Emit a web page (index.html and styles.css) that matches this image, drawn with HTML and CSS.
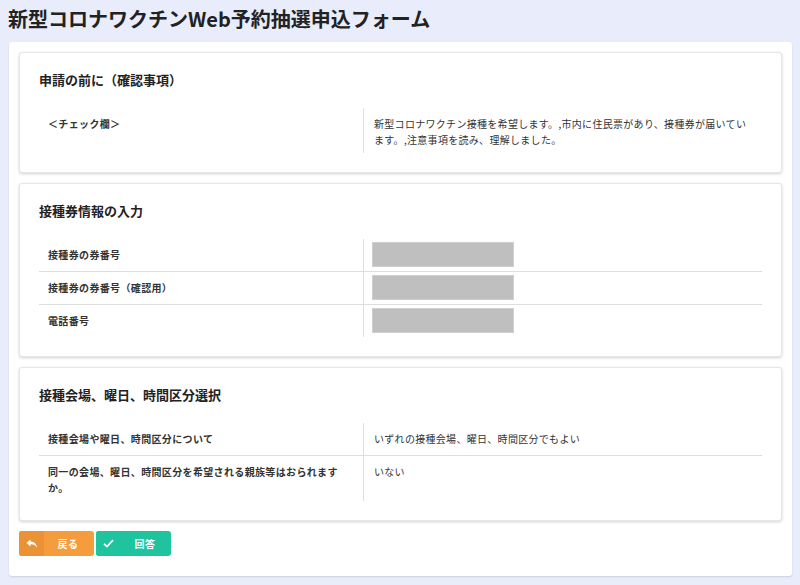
FILE: index.html
```html
<!DOCTYPE html>
<html lang="ja">
<head>
<meta charset="utf-8">
<title>新型コロナワクチンWeb予約抽選申込フォーム</title>
<link rel="stylesheet" href="styles.css">
</head>
<body>
<h1 class="page-title">新型コロナワクチンWeb予約抽選申込フォーム</h1>
<main class="panel">
  <section class="card">
    <h2 class="card-title">申請の前に（確認事項）</h2>
    <div class="table">
      <div class="row">
        <div class="label">＜チェック欄＞</div>
        <div class="value">新型コロナワクチン接種を希望します。,市内に住民票があり、接種券が届いています。,注意事項を読み、理解しました。</div>
      </div>
    </div>
  </section>
  <section class="card">
    <h2 class="card-title">接種券情報の入力</h2>
    <div class="table">
      <div class="row">
        <div class="label label-mid">接種券の券番号</div>
        <div class="value value-box"><div class="masked"></div></div>
      </div>
      <div class="row">
        <div class="label label-mid">接種券の券番号（確認用）</div>
        <div class="value value-box"><div class="masked"></div></div>
      </div>
      <div class="row">
        <div class="label label-mid">電話番号</div>
        <div class="value value-box"><div class="masked"></div></div>
      </div>
    </div>
  </section>
  <section class="card">
    <h2 class="card-title">接種会場、曜日、時間区分選択</h2>
    <div class="table">
      <div class="row">
        <div class="label">接種会場や曜日、時間区分について</div>
        <div class="value">いずれの接種会場、曜日、時間区分でもよい</div>
      </div>
      <div class="row">
        <div class="label">同一の会場、曜日、時間区分を希望される親族等はおられますか。</div>
        <div class="value">いない</div>
      </div>
    </div>
  </section>
  <div class="actions">
    <button class="btn btn-back" type="button">
      <span class="btn-icon">
        <svg width="12" height="10" viewBox="0 0 12 10"><path d="M4.5 0.5 L0.5 4 L4.5 7.5 V5.3 C7.5 5.1 9.5 6 11 9 C10.6 5.2 8.5 2.8 4.5 2.6 Z" fill="#fff"/></svg>
      </span>
      <span class="btn-text">戻る</span>
    </button>
    <button class="btn btn-submit" type="button">
      <span class="btn-icon">
        <svg width="11" height="9" viewBox="0 0 11 9"><path d="M1 4.8 L4 7.6 L10 1.2" fill="none" stroke="#fff" stroke-width="1.8"/></svg>
      </span>
      <span class="btn-text">回答</span>
    </button>
  </div>
</main>
</body>
</html>
```

FILE: styles.css
```css
* { box-sizing: border-box; }
html, body { margin: 0; }
body {
  background: #e8ecfb;
  padding: 0 8px 0 8px;
  font-family: "Noto Sans CJK JP", "Noto Sans", sans-serif;
  color: #333;
  height: 585px;
  overflow: hidden;
}
.page-title {
  margin: 5px 0 9px 0;
  font-size: 20px;
  line-height: 28px;
  font-weight: 700;
  color: #222;
}
.panel {
  margin-left: 1px;
  background: #fff;
  border-radius: 3px;
  box-shadow: 0 1px 2px rgba(0,0,0,0.12);
  padding: 10px 10px 20px 10px;
  display: flex;
  flex-direction: column;
  gap: 10px;
}
.card {
  background: #fff;
  border: 1px solid #e6e6e6;
  border-radius: 3px;
  box-shadow: 0 1px 3px rgba(0,0,0,0.18);
  padding: 19px 19px 19px 19px;
}
.card-title {
  margin: 0 0 20px 0;
  font-size: 13px;
  line-height: 16px;
  font-weight: 700;
  color: #222;
}
.table {
  display: flex;
  flex-direction: column;
}
.row {
  display: grid;
  grid-template-columns: 324px 1fr;
  min-height: 32px;
}
.row + .row { border-top: 1px solid #dedede; }
.label {
  padding: 8px 20px 5px 9px;
  font-size: 10px;
  line-height: 16px;
  font-weight: 700;
  letter-spacing: 0.35px;
  color: #333;
}
.label-mid {
  display: flex;
  align-items: center;
  padding-top: 4px;
  padding-bottom: 4px;
}
.value {
  border-left: 1px solid #dedede;
  padding: 8px 10px 5px 10px;
  font-size: 10px;
  line-height: 16px;
  letter-spacing: 0.3px;
  color: #333;
}
.value-box {
  padding: 3px 8px 4px 8px;
}
.masked {
  width: 142px;
  height: 25px;
  background: #bfbfbf;
  border: 1px solid #cfcfcf;
}
.actions {
  display: flex;
  gap: 2px;
}
.btn {
  display: flex;
  align-items: stretch;
  width: 75px;
  height: 25px;
  padding: 0;
  border: none;
  border-radius: 3px;
  overflow: hidden;
  font-family: inherit;
  cursor: pointer;
}
.btn-icon {
  width: 25px;
  display: flex;
  align-items: center;
  justify-content: center;
}
.btn-text {
  flex: 1;
  display: flex;
  align-items: center;
  justify-content: center;
  color: #fff;
  font-size: 10px;
  font-weight: 700;
  letter-spacing: 0.5px;
  padding-right: 2px;
}
.btn-back { background: #f59d3d; }
.btn-back .btn-icon { background: #ec9236; }
.btn-submit { background: #1fc49f; }
.btn-submit .btn-icon { background: #1fc49f; }
```
